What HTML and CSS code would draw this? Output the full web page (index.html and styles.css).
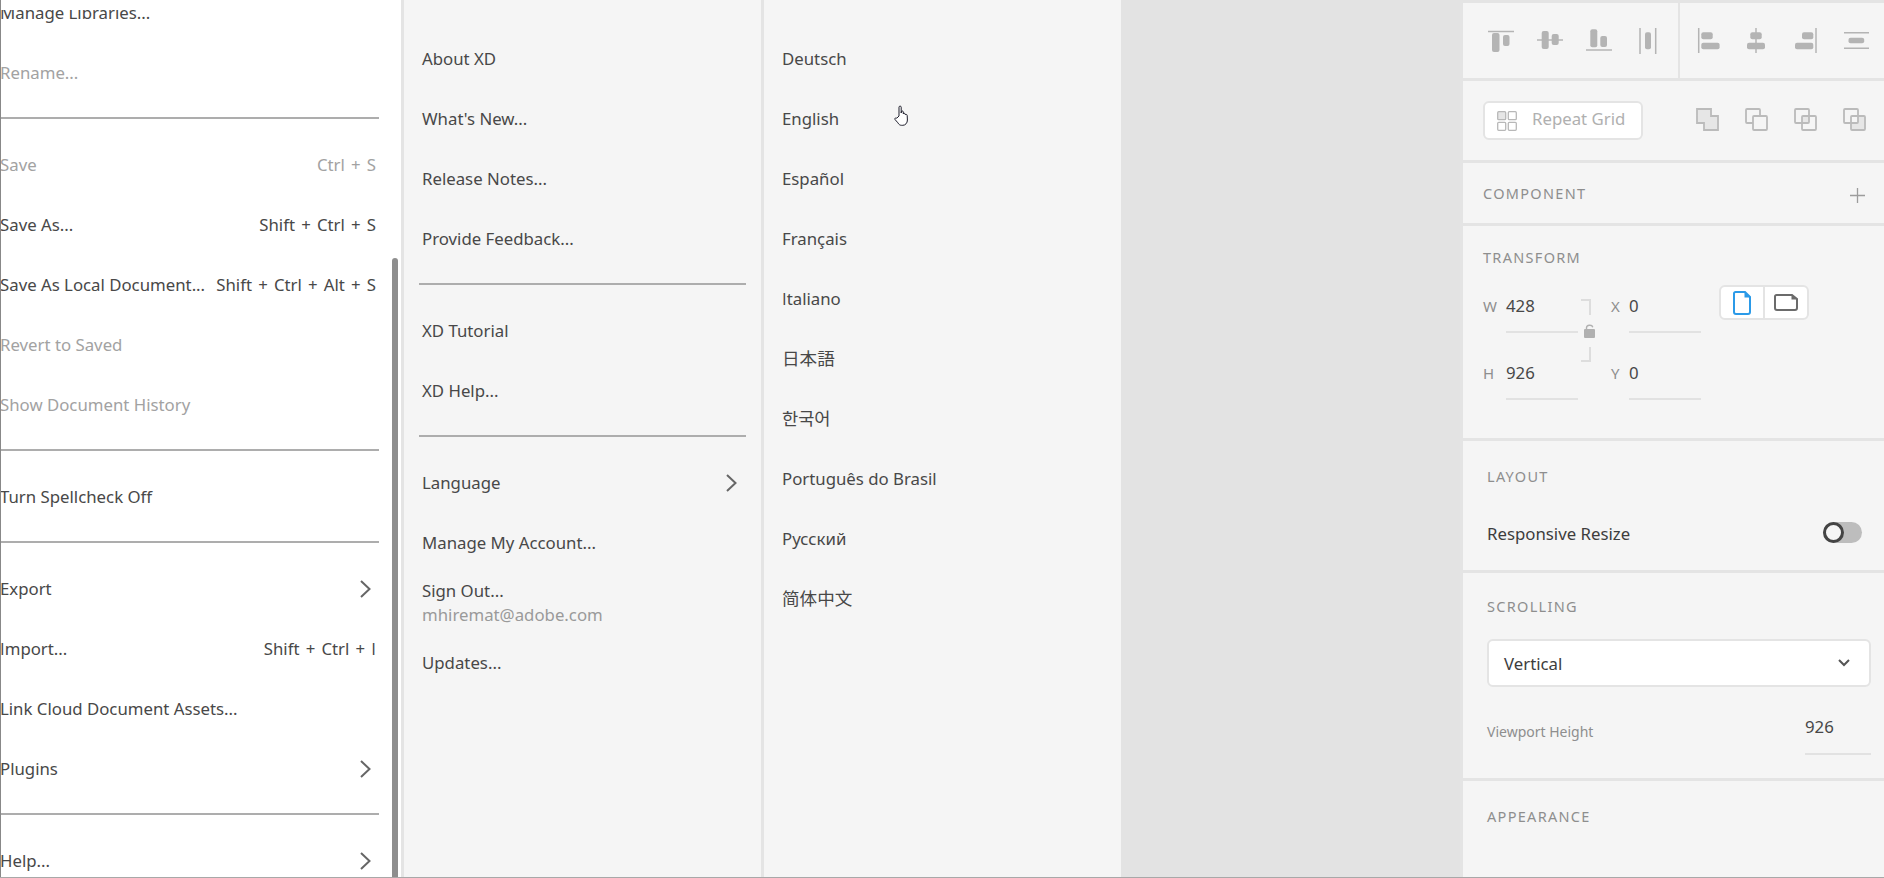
FILE: index.html
```html
<!DOCTYPE html>
<html lang="en">
<head>
<meta charset="utf-8">
<title>Adobe XD menu</title>
<link rel="stylesheet" href="styles.css">
</head>
<body>
<div class="app">
  <nav class="menu menu-main">
    <div class="scroll-view">
      <div class="scroll-list">
        <div class="row">Manage Libraries...</div>
        <div class="row off">Rename...</div>
        <div class="sep"></div>
        <div class="row off"><span>Save</span><span class="kbd">Ctrl + S</span></div>
        <div class="row"><span>Save As...</span><span class="kbd">Shift + Ctrl + S</span></div>
        <div class="row"><span>Save As Local Document...</span><span class="kbd">Shift + Ctrl + Alt + S</span></div>
        <div class="row off">Revert to Saved</div>
        <div class="row off">Show Document History</div>
        <div class="sep"></div>
        <div class="row">Turn Spellcheck Off</div>
        <div class="sep"></div>
        <div class="row"><span>Export</span><svg class="chev" viewBox="0 0 11 18"><path d="M1 1l8.500 8-8.500 8"/></svg></div>
        <div class="row"><span><span class="cap-i">I</span>mport...</span><span class="kbd">Shift + Ctrl + <span class="cap-i">I</span></span></div>
        <div class="row">Link Cloud Document Assets...</div>
        <div class="row"><span>Plugins</span><svg class="chev" viewBox="0 0 11 18"><path d="M1 1l8.500 8-8.500 8"/></svg></div>
        <div class="sep"></div>
        <div class="row"><span>Help...</span><svg class="chev" viewBox="0 0 11 18"><path d="M1 1l8.500 8-8.500 8"/></svg></div>
      </div>
    </div>
    <div class="scrollbar"></div>
  </nav>

  <nav class="menu menu-help">
    <div class="row">About XD</div>
    <div class="row">What's New...</div>
    <div class="row">Release Notes...</div>
    <div class="row">Provide Feedback...</div>
    <div class="sep"></div>
    <div class="row">XD Tutorial</div>
    <div class="row">XD Help...</div>
    <div class="sep"></div>
    <div class="row"><span>Language</span><svg class="chev" viewBox="0 0 11 18"><path d="M1 1l8.500 8-8.500 8"/></svg></div>
    <div class="row">Manage My Account...</div>
    <div class="row row-stack"><span>Sign Out...</span><span class="email">mhiremat@adobe.com</span></div>
    <div class="row">Updates...</div>
  </nav>

  <nav class="menu menu-lang">
    <div class="row">Deutsch</div>
    <div class="row">English</div>
    <div class="row">Español</div>
    <div class="row">Français</div>
    <div class="row"><span><span class="cap-i">I</span>taliano</span></div>
    <div class="row cjk" lang="ja">日本語</div>
    <div class="row cjk" lang="ko">한국어</div>
    <div class="row">Português do Brasil</div>
    <div class="row">Русский</div>
    <div class="row cjk" lang="zh-CN">简体中文</div>
    <svg class="cursor" viewBox="0 0 17 21"><path d="M5 11V2.200c0-1.500 2.200-1.500 2.200 0V8l.1-1.200c.2-1.200 2-1 2 .2V9c.2-1 1.900-.9 2 .2v.8c.3-.8 1.800-.7 1.900.4l.2 4.600c0 3-2 5.300-4.600 5.300H7.500c-1.700 0-2.800-1-3.600-2.500L1 14.500c-.6-1.200.8-2.200 1.800-1.300z" fill="#fff" stroke="#1d1d2b" stroke-width="1"/></svg>
  </nav>

  <div class="canvas"></div>

  <aside class="panel">
    <section class="sec sec-align">
      <div class="align-group align-a">
        <svg class="ic" viewBox="0 0 26 26"><path class="ln" d="M0 3.500H26"/><rect x="4" y="5" width="7.500" height="19" rx="2"/><rect x="15" y="7" width="6.500" height="11" rx="2"/></svg>
        <svg class="ic" viewBox="0 0 26 26"><path class="ln" d="M0 12H26"/><rect x="4.700" y="3" width="7" height="18" rx="2"/><rect x="14.700" y="6" width="7" height="11" rx="2"/></svg>
        <svg class="ic" viewBox="0 0 26 26"><path class="ln" d="M0 22H26"/><rect x="4.300" y="1.300" width="7" height="18" rx="2"/><rect x="14.300" y="8" width="6.700" height="11" rx="2"/></svg>
        <svg class="ic" viewBox="0 0 26 26"><path class="ln" d="M5 0V26M20.700 0V26"/><rect x="10" y="4.300" width="6" height="17" rx="2"/></svg>
      </div>
      <div class="align-group align-b">
        <svg class="ic" viewBox="0 0 26 26"><path class="ln" d="M1.700 0V25"/><rect x="4.300" y="4.300" width="11.400" height="7" rx="2"/><rect x="4.300" y="14.700" width="18.300" height="6.600" rx="2"/></svg>
        <svg class="ic" viewBox="0 0 26 26"><path class="ln" d="M10 0V25"/><rect x="4.300" y="4.300" width="11.400" height="7" rx="2"/><rect x="1" y="14.700" width="18" height="6.600" rx="2"/></svg>
        <svg class="ic" viewBox="0 0 26 26"><path class="ln" d="M21 0V25"/><rect x="7" y="4.300" width="11.300" height="7" rx="2"/><rect x="0" y="14.700" width="18.300" height="6.600" rx="2"/></svg>
        <svg class="ic" viewBox="0 0 26 26"><path class="ln" d="M0 4.700H25M0 20.300H25"/><rect x="4.500" y="9.700" width="15.700" height="5.600" rx="2"/></svg>
      </div>
    </section>

    <section class="sec sec-tools">
      <div class="repeat">
        <svg class="rg" viewBox="0 0 20 20"><rect class="f" x=".7" y=".7" width="8" height="8" rx="1"/><rect x="11.300" y=".7" width="8" height="8" rx="1"/><rect x=".7" y="11.300" width="8" height="8" rx="1"/><rect x="11.300" y="11.300" width="8" height="8" rx="1"/></svg>
        <span class="repeat-t">Repeat Grid</span>
      </div>
      <div class="bools">
        <svg class="bl" viewBox="0 0 23 23"><path class="f" d="M1 1H15V8H22V22H8V15H1Z"/></svg>
        <svg class="bl" viewBox="0 0 23 23"><rect x="1" y="1" width="14" height="14" rx="1"/><rect class="b" x="8" y="8" width="14" height="14" rx="1"/></svg>
        <svg class="bl" viewBox="0 0 23 23"><rect class="o" x="8" y="8" width="7" height="7"/><rect x="1" y="1" width="14" height="14" rx="1"/><rect x="8" y="8" width="14" height="14" rx="1"/></svg>
        <svg class="bl" viewBox="0 0 23 23"><path class="o" d="M15 8H22V22H8V15H15Z"/><rect x="1" y="1" width="14" height="14" rx="1"/><rect x="8" y="8" width="14" height="14" rx="1"/></svg>
      </div>
    </section>

    <section class="sec sec-comp">
      <h2 class="label">COMPONENT</h2>
      <svg class="plus" viewBox="0 0 15 15"><path d="M7.500 0V15M0 7.500H15"/></svg>
    </section>

    <section class="sec sec-tf">
      <h2 class="label">TRANSFORM</h2>
      <div class="tf">
        <div class="tf-col tf-wh">
          <div class="field"><span class="k">W</span><span class="v">428</span></div>
          <div class="field"><span class="k">H</span><span class="v">926</span></div>
        </div>
        <div class="link">
          <div class="br br-top"></div>
          <svg class="lock" viewBox="0 0 11 14"><path d="M2.500 6V3.800C2.500 .6 8 .4 8.800 3.200" fill="none" stroke="#b0b0b0" stroke-width="1.400"/><rect x="0" y="5" width="11" height="9" rx="1" fill="#b0b0b0"/></svg>
          <div class="br br-bot"></div>
        </div>
        <div class="tf-col tf-xy">
          <div class="field"><span class="k">X</span><span class="v">0</span></div>
          <div class="field"><span class="k">Y</span><span class="v">0</span></div>
        </div>
        <div class="orient">
          <div class="o-btn o-first"><svg class="pg" viewBox="0 0 18 24"><path d="M2.500 1H12L17 6V21C17 22.200 16.200 23 15 23H3C1.800 23 1 22.200 1 21V2.500C1 1.600 1.600 1 2.500 1Z" fill="#fff" stroke="#2b9ae8" stroke-width="2"/><path d="M11.500 1L17 6.500H11.500Z" fill="#2b9ae8"/></svg></div>
          <div class="o-btn"><svg class="ld" viewBox="0 0 24 17"><path d="M2.500 1H18L23 5V14C23 15.200 22.200 16 21 16H3C1.800 16 1 15.200 1 14V2.500C1 1.600 1.600 1 2.500 1Z" fill="#fff" stroke="#6b6b6b" stroke-width="2"/><path d="M17.500 1L23 5.500H17.500Z" fill="#6b6b6b"/></svg></div>
        </div>
      </div>
    </section>

    <section class="sec sec-layout">
      <h2 class="label">LAYOUT</h2>
      <div class="resp">
        <span>Responsive Resize</span>
        <div class="toggle"><div class="thumb"></div></div>
      </div>
    </section>

    <section class="sec sec-scroll">
      <h2 class="label">SCROLLING</h2>
      <div class="select">
        <span>Vertical</span>
        <svg class="sel-chev" viewBox="0 0 12 8"><path d="M1 1l5 5 5-5"/></svg>
      </div>
      <div class="vp">
        <span class="vp-k">Viewport Height</span>
        <span class="vp-v">926</span>
      </div>
    </section>

    <section class="sec sec-app">
      <h2 class="label">APPEARANCE</h2>
    </section>
  </aside>
</div>
</body>
</html>
```
FILE: styles.css
```css
* { box-sizing: border-box; }
html, body { margin: 0; padding: 0; height: 100%; overflow: hidden; }
body {
  font-family: "Noto Sans", "Noto Sans CJK SC", sans-serif;
  font-size: 16.8px;
  color: #484848;
  background: #f5f5f5;
}
[lang="ja"] { font-family: "Noto Sans CJK JP", sans-serif; }
[lang="ko"] { font-family: "Noto Sans CJK KR", sans-serif; }
[lang="zh-CN"] { font-family: "Noto Sans CJK SC", sans-serif; }
.cap-i { font-family: "Open Sans", sans-serif; }

.app {
  display: flex;
  width: 1884px;
  height: 878px;
  border-bottom: 1px solid #a8a8a8;
  overflow: hidden;
}

.menu { position: relative; overflow: hidden; flex: none; height: 100%; }
.menu-main {
  width: 404px;
  background: #fff;
  border-left: 1px solid #888;
  border-right: 3px solid #e4e4e4;
  padding-top: 10px;
}
.scroll-view { height: 100%; overflow: hidden; margin-left: -1px; }
.scroll-list { margin-top: -28px; padding-right: 25px; }
.menu-help { width: 360px; padding: 28px 24px 0 18px; border-right: 3px solid #e4e4e4; }
.menu-lang { width: 357px; padding: 28px 24px 0 18px; }

.row {
  display: flex;
  justify-content: space-between;
  align-items: center;
  height: 60px;
  padding-top: 1px;
  white-space: nowrap;
}
.off { color: #a2a2a2; }
.kbd { word-spacing: 1.8px; }
.cjk { font-size: 17.6px; padding: 0 0 2px; }
.row-stack {
  flex-direction: column;
  align-items: flex-start;
  justify-content: center;
  line-height: 24px;
}
.email { color: #9a9a9a; }

.sep { height: 2px; margin: 15px 0; background: #adadad; }
.scroll-list .sep { margin-right: -3px; }
.menu-help .sep { margin: 15px -9px 15px -3px; }

.chev {
  width: 11px;
  height: 18px;
  margin-right: 5px;
  fill: none;
  stroke: #666;
  stroke-width: 2;
}
.menu-help .chev { margin-right: 0; }

.scrollbar {
  position: absolute;
  left: 391px;
  top: 258px;
  bottom: 0;
  width: 6px;
  border-radius: 3px 3px 0 0;
  background: #8e8e8e;
}

.cursor { position: absolute; left: 130px; top: 105px; width: 17px; height: 21px; }

.canvas { flex: none; width: 339px; height: 100%; background: #e3e3e3; }

.panel {
  flex: none;
  width: 424px;
  height: 100%;
  border-left: 3px solid #e4e4e4;
  border-top: 3px solid #e4e4e4;
  background: #f5f5f5;
}
.sec { border-bottom: 3px solid #e4e4e4; }
.label {
  margin: 0;
  font-size: 14.5px;
  font-weight: 400;
  line-height: 20px;
  letter-spacing: 1.3px;
  color: #8e8e8e;
}

.sec-align { display: flex; height: 78px; }
.align-group { display: flex; align-items: flex-start; gap: 23px; padding-top: 25px; }
.align-a { width: 217px; padding-left: 25px; border-right: 2px solid #e4e4e4; }
.align-b { padding-left: 17px; }
.ic { width: 26px; height: 26px; overflow: visible; }
.ic rect { fill: #b4b4b4; }
.ic .ln { fill: none; stroke: #b4b4b4; stroke-width: 1.5; }

.sec-tools {
  display: flex;
  align-items: center;
  height: 82px;
  padding-left: 20px;
}
.repeat {
  display: flex;
  align-items: center;
  width: 160px;
  height: 39px;
  padding-left: 12px;
  background: #fff;
  border: 2px solid #e4e4e4;
  border-radius: 6px;
  color: #b0b0b0;
}
.repeat-t { padding-bottom: 5px; }
.rg { width: 20px; height: 20px; margin-right: 15px; fill: none; stroke: #b8b8b8; stroke-width: 1.3; }
.rg .f { fill: #e6e6e6; }
.bools { display: flex; gap: 26px; margin: 0 0 3px 53px; }
.bl { width: 23px; height: 23px; fill: none; stroke: #bbb; stroke-width: 1.8; }
.bl .f { fill: #e6e6e6; }
.bl .b { fill: #f5f5f5; }
.bl .o { fill: #e6e6e6; stroke: none; }

.sec-comp {
  display: flex;
  justify-content: space-between;
  align-items: center;
  height: 63px;
  padding: 0 19px 0 20px;
}
.plus { width: 15px; height: 15px; margin-top: 4px; fill: none; stroke: #9c9c9c; stroke-width: 1.3; }

.sec-tf { height: 215px; padding: 21px 0 0 20px; }
.tf { display: flex; align-items: flex-start; margin-top: 12px; }
.tf-col { display: flex; flex-direction: column; gap: 13px; }
.field { display: flex; height: 54px; padding-top: 16px; line-height: 22px; }
.k { color: #8e8e8e; font-size: 15px; }
.tf-wh .k { width: 23px; }
.tf-xy .k { width: 18px; }
.v {
  display: block;
  width: 72px;
  height: 38px;
  border-bottom: 2px solid #e2e2e2;
}
.link { display: flex; flex-direction: column; align-items: flex-start; width: 14px; margin: 20px 16px 0 3px; }
.br { width: 10px; height: 16px; border-right: 2px solid #ddd; }
.br-top { border-top: 2px solid #ddd; }
.br-bot { height: 15px; border-bottom: 2px solid #ddd; }
.lock { width: 11px; height: 14px; margin: 9px 0 9px 3px; }
.orient {
  display: flex;
  height: 35px;
  margin: 6px 0 0 18px;
  background: #fff;
  border: 2px solid #e4e4e4;
  border-radius: 6px;
}
.o-btn { display: flex; align-items: center; justify-content: center; width: 42px; }
.o-first { width: 44px; border-right: 2px solid #e4e4e4; }
.pg { width: 18px; height: 24px; }
.ld { width: 24px; height: 17px; }

.sec-layout { height: 132px; padding: 25px 22px 0 24px; }
.resp { display: flex; justify-content: space-between; align-items: center; margin-top: 34px; color: #3d3d3d; }
.resp span { padding-top: 2px; }
.toggle { position: relative; width: 39px; height: 21px; border-radius: 11px; background: #bdbdbd; }
.thumb {
  position: absolute;
  left: 0;
  top: 0;
  width: 21px;
  height: 21px;
  border: 3px solid #444;
  border-radius: 50%;
  background: #f5f5f5;
}

.sec-scroll { height: 208px; padding: 23px 13px 0 24px; }
.select {
  display: flex;
  justify-content: space-between;
  align-items: center;
  height: 48px;
  margin-top: 23px;
  padding: 0 19px 0 15px;
  background: #fff;
  border: 2px solid #e4e4e4;
  border-radius: 6px;
  color: #3d3d3d;
}
.sel-chev { width: 12px; height: 8px; fill: none; stroke: #555; stroke-width: 2; }
.vp { display: flex; justify-content: space-between; align-items: flex-start; margin-top: 26px; }
.vp-k { font-size: 14px; line-height: 20px; color: #8e8e8e; margin-top: 9px; }
.vp-v { width: 66px; height: 42px; padding-top: 1px; line-height: 26px; border-bottom: 2px solid #e2e2e2; }

.sec-app { border-bottom: 0; padding: 25px 0 0 24px; }
```
